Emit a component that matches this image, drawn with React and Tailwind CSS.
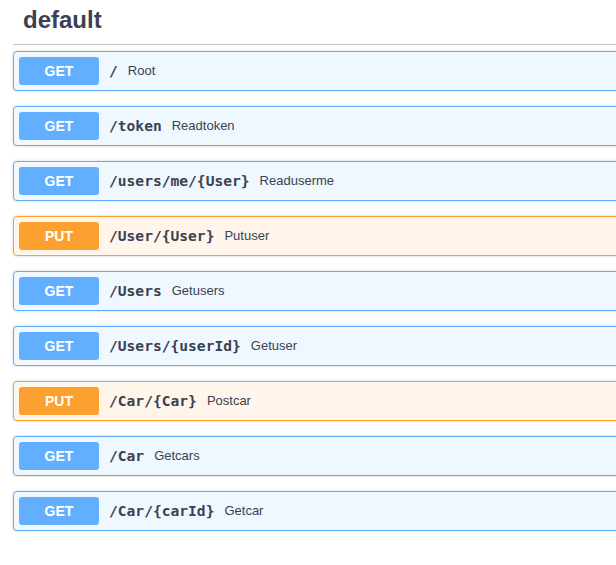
import React from "react";

const ops = [
  { method: "GET", path: "/", summary: "Root" },
  { method: "GET", path: "/token", summary: "Readtoken" },
  { method: "GET", path: "/users/me/{User}", summary: "Readuserme" },
  { method: "PUT", path: "/User/{User}", summary: "Putuser" },
  { method: "GET", path: "/Users", summary: "Getusers" },
  { method: "GET", path: "/Users/{userId}", summary: "Getuser" },
  { method: "PUT", path: "/Car/{Car}", summary: "Postcar" },
  { method: "GET", path: "/Car", summary: "Getcars" },
  { method: "GET", path: "/Car/{carId}", summary: "Getcar" },
];

function OpBlock({ method, path, summary }) {
  const isPut = method === "PUT";

  return (
    <div
      className={`flex items-center p-[5px] rounded-[4px] border shadow-[0_0_3px_rgba(0,0,0,0.19)] ${
        isPut ? "bg-[#fff5ea] border-[#fca130]" : "bg-[#eff7ff] border-[#61affe]"
      }`}
    >
      <span
        className={`w-[80px] h-[28px] flex items-center justify-center rounded-[3px] text-white text-[14px] font-bold ${
          isPut ? "bg-[#fca130]" : "bg-[#61affe]"
        }`}
      >
        {method}
      </span>
      <span className="px-[10px] font-['DejaVu_Sans_Mono',monospace] font-bold text-[14.6px] text-[#3b4151]">
        {path}
      </span>
      <span className="text-[13px] text-[#3b4151]">{summary}</span>
    </div>
  );
}

export default function App() {
  return (
    <div className="w-full overflow-hidden bg-white font-['Liberation_Sans',Arial,sans-serif]">
      <div className="w-[640px] ml-[13px]">
        <h3 className="pt-[6px] pb-[10px] pl-[10px] text-[24px] leading-[28px] font-bold text-[#3b4151] border-b border-[#c4c6cb]">
          default
        </h3>

        <div className="flex flex-col gap-[15px] mt-[6px] pb-[30px]">
          {ops.map((op) => (
            <OpBlock key={op.method + op.path} {...op} />
          ))}
        </div>
      </div>
    </div>
  );
}
